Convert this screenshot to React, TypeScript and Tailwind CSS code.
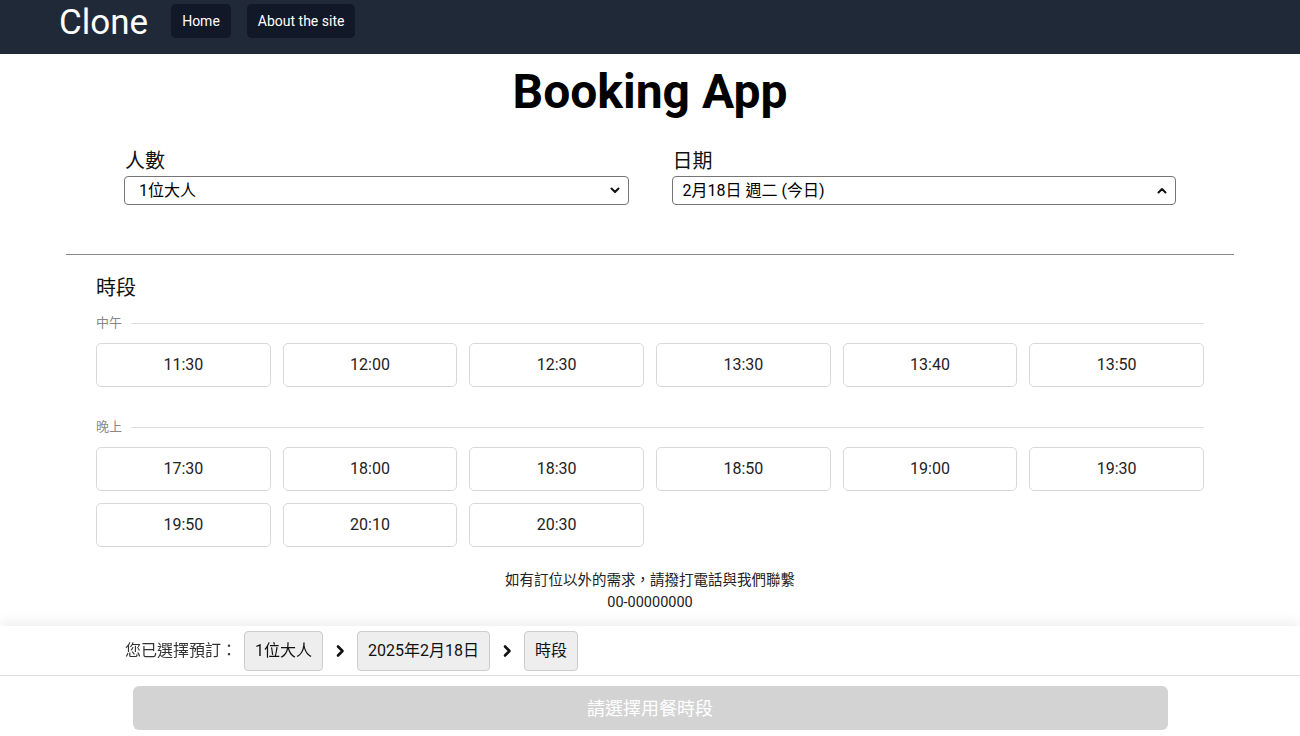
import React from "react";

const FONT = { fontFamily: 'Roboto, "Noto Sans CJK TC", sans-serif' };

function ChevronDown() {
  return (
    <svg width="10" height="7" viewBox="0 0 10 7" className="absolute right-[9px] top-[11px] pointer-events-none">
      <path d="M1.5 1.5 L5 5 L8.5 1.5" fill="none" stroke="#111" strokeWidth="2" strokeLinecap="round" strokeLinejoin="round" />
    </svg>
  );
}
function ChevronUp() {
  return (
    <svg width="10" height="7" viewBox="0 0 10 7" className="absolute right-[9px] top-[11px] pointer-events-none">
      <path d="M1.5 5.5 L5 2 L8.5 5.5" fill="none" stroke="#111" strokeWidth="2" strokeLinecap="round" strokeLinejoin="round" />
    </svg>
  );
}
function ChevronRight() {
  return (
    <svg width="10" height="14" viewBox="0 0 10 14">
      <path d="M3 2.5 L7.5 7 L3 11.5" fill="none" stroke="#111" strokeWidth="2.6" strokeLinecap="round" strokeLinejoin="round" />
    </svg>
  );
}

function SlotButton({ t }: { t: string }) {
  return (
    <button className="h-[44px] rounded-[5px] border-[1.5px] border-[#d8d8d8] bg-white text-[16px] text-[#222]">
      {t}
    </button>
  );
}

function Group({ name, slots }: { name: string; slots: string[] }) {
  return (
    <div>
      <div className="flex items-center gap-[9px] h-[20px]">
        <span className="text-[13px] text-[#888]">{name}</span>
        <div className="flex-1 h-px bg-[#dddddd]" />
      </div>
      <div className="mt-[10px] grid grid-cols-6 gap-[12px]">
        {slots.map((s) => (
          <SlotButton key={s} t={s} />
        ))}
      </div>
    </div>
  );
}

export default function App() {
  return (
    <div style={FONT} className="min-h-[736px] bg-white text-[#111]">
      <nav className="h-[54px] bg-[#1f2937] flex items-center pl-[59px]">
        <span className="text-[35px] text-white leading-none mr-[23px] -mt-[10px]">Clone</span>
        <div className="flex gap-[16px] self-start mt-[4px]">
          <button className="h-[34px] px-[11px] rounded-[5px] bg-[#111827] text-white text-[14px] font-normal">Home</button>
          <button className="h-[34px] px-[11px] rounded-[5px] bg-[#111827] text-white text-[14px] font-normal">About the site</button>
        </div>
      </nav>

      <h1 className="mt-[9px] text-center text-[48px] font-bold leading-[58px] text-black">Booking App</h1>

      <div className="mt-[26px] w-[1052px] mx-auto grid grid-cols-2 gap-[43px]">
        <div>
          <div className="text-[20px] leading-[28px] pl-px">人數</div>
          <div className="relative mt-[1px]">
            <select style={FONT} className="w-full h-[29px] appearance-none rounded-[4px] border border-[#767676] bg-white pl-[14px] text-[16px] text-black">
              <option>1位大人</option>
            </select>
            <ChevronDown />
          </div>
        </div>
        <div>
          <div className="text-[20px] leading-[28px] pl-px">日期</div>
          <div className="relative mt-[1px]">
            <select style={FONT} className="w-full h-[29px] appearance-none rounded-[4px] border border-[#767676] bg-white pl-[10px] text-[16px] text-black">
              <option>2月18日 週二 (今日)</option>
            </select>
            <ChevronUp />
          </div>
        </div>
      </div>

      <div className="w-[1168px] mx-auto mt-[49px] border-t border-[#888]">
        <div className="px-[30px]">
          <div className="mt-[19px] text-[20px] leading-[28px]">時段</div>
          <div className="mt-[11px]">
            <Group name="中午" slots={["11:30", "12:00", "12:30", "13:30", "13:40", "13:50"]} />
          </div>
          <div className="mt-[30px]">
            <Group name="晚上" slots={["17:30", "18:00", "18:30", "18:50", "19:00", "19:30", "19:50", "20:10", "20:30"]} />
          </div>
          <div className="mt-[23px] text-center text-[14.5px] leading-[22px] text-[#222]">
            <div>如有訂位以外的需求，請撥打電話與我們聯繫</div>
            <div>00-00000000</div>
          </div>
        </div>
      </div>

      <div className="fixed bottom-0 left-0 right-0 bg-white shadow-[0_-4px_12px_rgba(0,0,0,0.07)]">
        <div className="h-[50px] border-b border-[#dddddd] flex items-center pl-[125px] text-[16px]">
          <span className="text-[#333] mr-[7px]">您已選擇預訂：</span>
          <span className="h-[40px] px-[10px] flex items-center rounded-[4px] border border-[#cccccc] bg-[#eeeeee]">1位大人</span>
          <span className="mx-[12px] flex items-center"><ChevronRight /></span>
          <span className="h-[40px] px-[10px] flex items-center rounded-[4px] border border-[#cccccc] bg-[#eeeeee]">2025年2月18日</span>
          <span className="mx-[12px] flex items-center"><ChevronRight /></span>
          <span className="h-[40px] px-[10px] flex items-center rounded-[4px] border border-[#cccccc] bg-[#eeeeee]">時段</span>
        </div>
        <div className="pt-[10px] pb-[6px] flex justify-center">
          <button className="w-[1035px] h-[44px] rounded-[6px] bg-[#d3d3d3] text-white text-[18px]">請選擇用餐時段</button>
        </div>
      </div>
    </div>
  );
}
